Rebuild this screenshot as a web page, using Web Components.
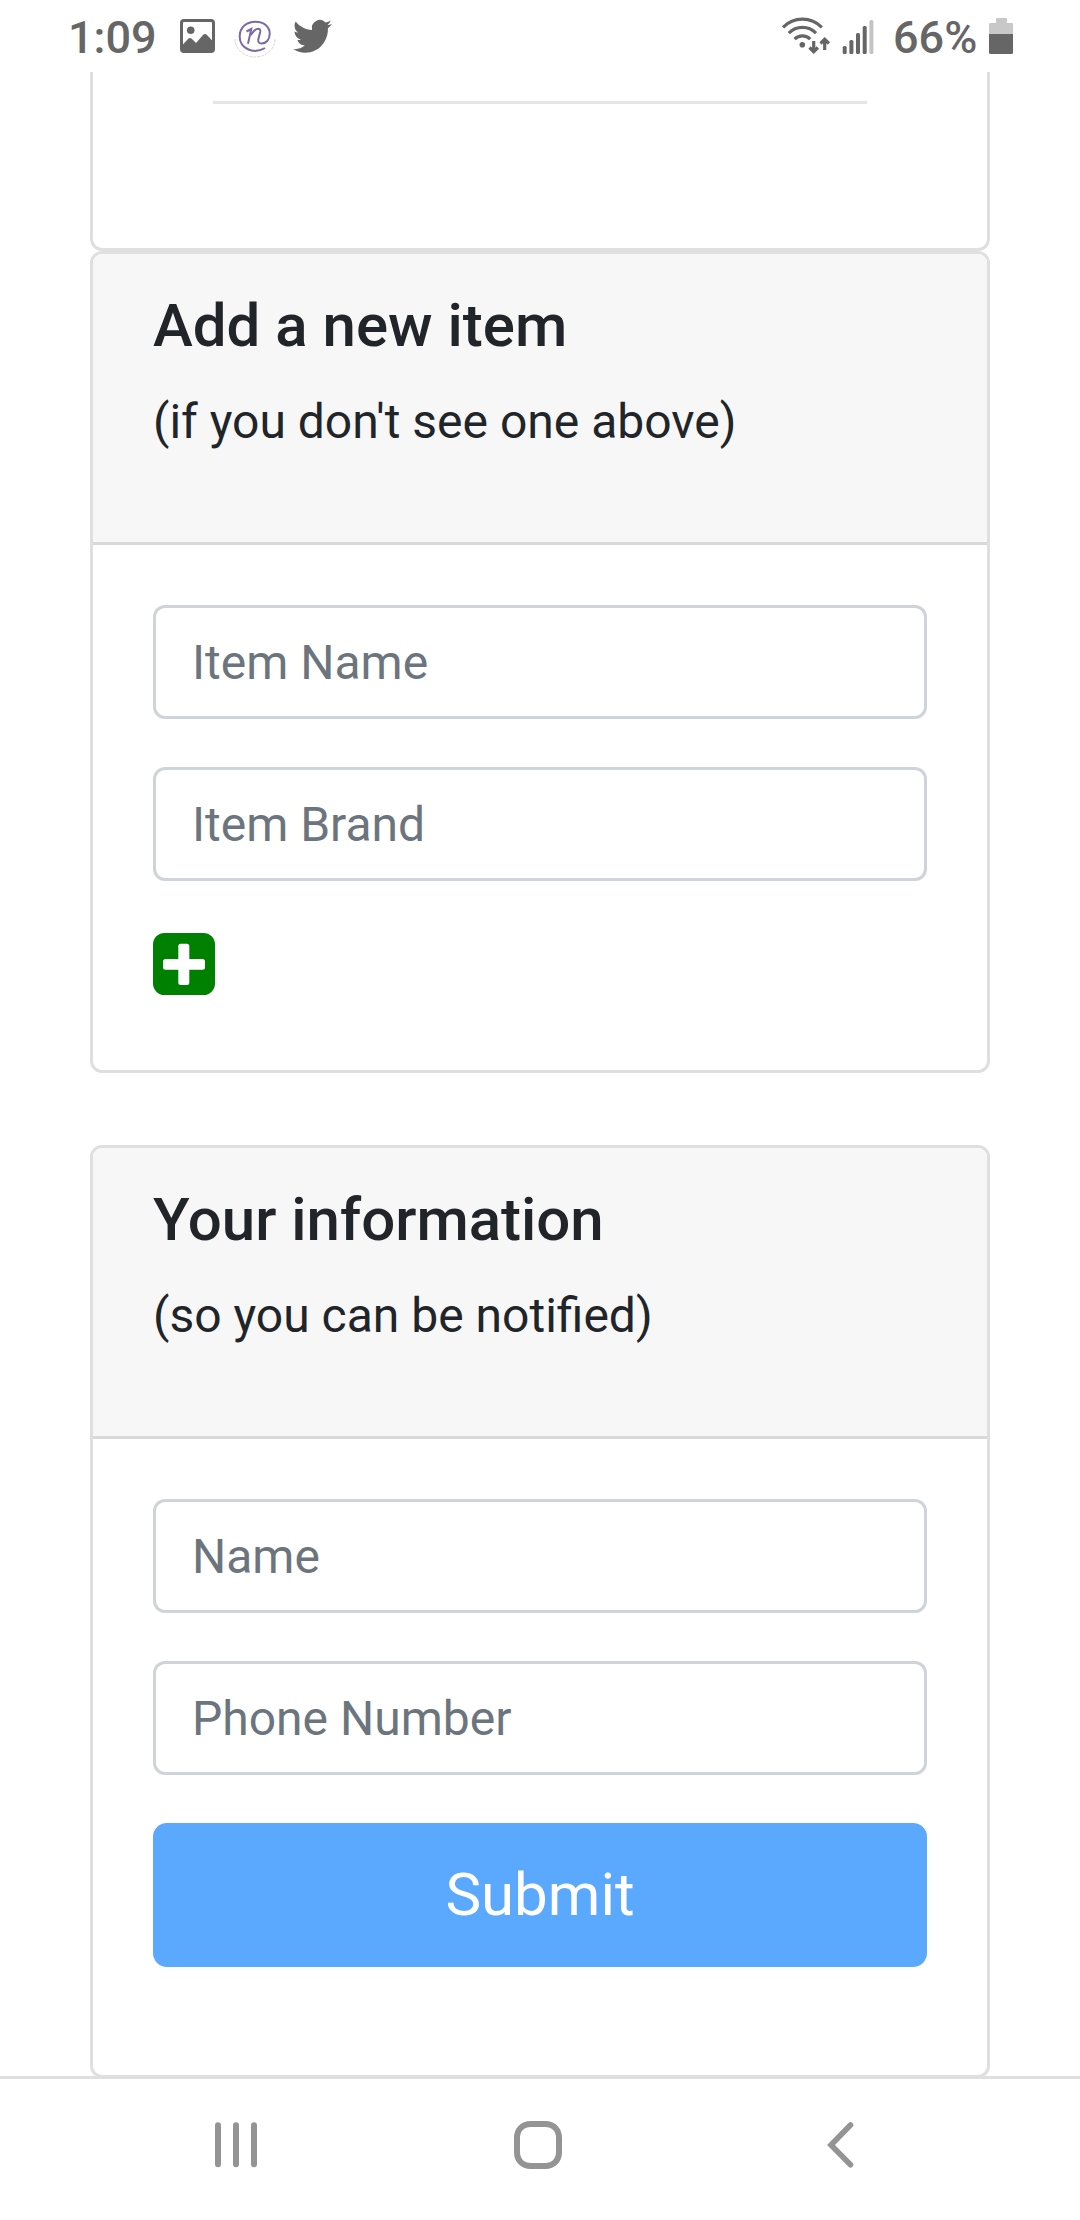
<!DOCTYPE html>
<html lang="en">
<head>
<meta charset="utf-8">
<meta name="viewport" content="width=device-width">
<title>Add a new item</title>
<style>
html, body { margin: 0; height: 2220px; overflow: hidden; background: #fff; }
body { font-family: Roboto, "Liberation Sans", sans-serif; color: #212529; }
</style>
</head>
<body>
<phone-screen>
  <status-bar slot="top" time="1:09" battery="66%"></status-bar>
  <list-card></list-card>
  <form-card>
    <span slot="title">Add a new item</span>
    <span slot="note">(if you don't see one above)</span>
    <text-field label="Item Name"></text-field>
    <text-field label="Item Brand"></text-field>
    <add-button></add-button>
  </form-card>
  <form-card class="second">
    <span slot="title">Your information</span>
    <span slot="note">(so you can be notified)</span>
    <text-field label="Name"></text-field>
    <text-field label="Phone Number"></text-field>
    <submit-button>Submit</submit-button>
  </form-card>
  <nav-bar slot="bottom"></nav-bar>
</phone-screen>

<script>
const define = (name, html, setup) => {
  const template = document.createElement('template');
  template.innerHTML = html;
  customElements.define(name, class extends HTMLElement {
    constructor() {
      super();
      this.attachShadow({ mode: 'open' }).append(template.content.cloneNode(true));
    }
    connectedCallback() {
      if (setup) setup(this, this.shadowRoot);
    }
  });
};

define('phone-screen', `
<style>
  :host { display: flex; flex-direction: column; width: 1080px; height: 2220px; background: #fff; }
  main { flex: 1; min-height: 0; overflow: hidden; display: flex; flex-direction: column; padding: 0 90px; }
  ::slotted(.second) { margin-top: 72px; }
</style>
<slot name="top"></slot>
<main><slot></slot></main>
<slot name="bottom"></slot>`);

define('status-bar', `
<style>
  :host { display: flex; justify-content: space-between; box-sizing: border-box; flex: none; height: 72px;
    padding: 0 67px 0 68px; color: #666; font-size: 45px; font-weight: 500; line-height: 75px; white-space: nowrap; }
  div { display: flex; }
  svg { display: block; flex: none; height: 72px; }
  .time { width: 112px; }
  .level { width: 96px; }
</style>
<div>
  <span class="time"></span>
  <svg width="35" viewBox="180 0 35 72" fill="none">
    <rect x="181.5" y="20.5" width="32" height="31" rx="2.5" stroke="#666" stroke-width="3"/>
    <circle cx="190.7" cy="30.3" r="3.8" fill="#666"/>
    <path d="M182 45.5L188 39Q190 37 192 39L196 43L203 35Q205 33 207 35L213.5 42V51.5H182Z" fill="#666"/>
  </svg>
  <svg width="42" style="margin-left:19px" viewBox="234 0 42 72" fill="none">
    <circle cx="255" cy="36.5" r="20" fill="#fff"/>
    <path d="M235 39A20 18 0 0 0 275 39" stroke="#ccc" stroke-width=".8" stroke-dasharray="3 1"/>
    <path d="M265 48C253 55 240 48 239.700 37C239.500 27 247 21.700 255.500 21.700C264 21.700 270 27 269.700 34C269.500 40 266 43.500 261.700 43.500C258.500 43.500 257.800 41.500 258.500 38.500L260.200 32C261 27.500 256.500 28 253.500 31.500L250.500 35" stroke="#7b68a6" stroke-width="2"/>
    <path d="M246.500 31.500L251.300 29L248 43.700" stroke="#7b68a6" stroke-width="2"/>
  </svg>
  <svg width="39" style="margin-left:16.5px" viewBox="0 0 39 72">
    <path transform="translate(0 16.2) scale(1.62 1.68)" fill="#666" d="M23.953 4.57a10 10 0 01-2.825.775 4.958 4.958 0 002.163-2.723c-.951.555-2.005.959-3.127 1.184a4.92 4.92 0 00-8.384 4.482C7.69 8.095 4.067 6.13 1.64 3.162a4.822 4.822 0 00-.666 2.475c0 1.71.87 3.213 2.188 4.096a4.904 4.904 0 01-2.228-.616v.06a4.923 4.923 0 003.946 4.827 4.996 4.996 0 01-2.212.085 4.936 4.936 0 004.604 3.417 9.867 9.867 0 01-6.102 2.105c-.39 0-.779-.023-1.17-.067a13.995 13.995 0 007.557 2.209c9.053 0 13.998-7.496 13.998-13.985 0-.21 0-.42-.015-.63A9.935 9.935 0 0024 4.59z"/>
  </svg>
</div>
<div>
  <svg width="112" viewBox="781 0 112 72" fill="none">
    <g stroke="#666" stroke-width="3.2">
      <path d="M783 27.3A27 27 0 0 1 821.8 27.3"/>
      <path d="M788.8 33.2A19 19 0 0 1 816 33.2"/>
      <path d="M794.6 39.2A11 11 0 0 1 810.2 39.2"/>
      <path d="M813.7 41V51.5M809.5 47.5L813.7 51.7L817.9 47.5M824.7 50V39.5M820.5 43.5L824.7 39.3L828.9 43.5"/>
    </g>
    <circle cx="802.3" cy="44.7" r="2.8" fill="#666"/>
    <g fill="#666">
      <rect x="842.7" y="46" width="4" height="8" rx="1.5"/>
      <rect x="849.4" y="40" width="4" height="14" rx="1.5"/>
      <rect x="856" y="33" width="4" height="21" rx="1.5"/>
      <rect x="862.7" y="26" width="4" height="28" rx="1.5"/>
      <rect x="869.4" y="20" width="4" height="34" rx="1.5" fill="#c4c4c4"/>
    </g>
  </svg>
  <span class="level"></span>
  <svg width="24" viewBox="989 0 24 72">
    <path d="M996 23V19Q996 18 997 18H1006Q1007 18 1007 19V23H1012Q1013 23 1013 24V34H989V24Q989 23 990 23Z" fill="#c8c8c8"/>
    <path d="M989 34H1013V52.5Q1013 54 1011.5 54H990.5Q989 54 989 52.5Z" fill="#666"/>
  </svg>
</div>`, (host, root) => {
  root.querySelector('.time').textContent = host.getAttribute('time');
  root.querySelector('.level').textContent = host.getAttribute('battery');
});

// Lower end of the scrolled item list.
define('list-card', `
<style>
  :host { display: block; box-sizing: border-box; flex: none; height: 179px; padding: 29px 120px 0;
    border: 3px solid #dfdfdf; border-top: 0; border-radius: 0 0 12px 12px; }
  hr { margin: 0; border: 0; height: 3px; background: #e5e5e5; }
</style>
<hr>`);

define('form-card', `
<style>
  :host { display: block; box-sizing: border-box; flex: none; border: 3px solid #dfdfdf; border-radius: 12px; background: #fff; }
  header { padding: 36px 60px; background: #f7f7f7; border-bottom: 3px solid #d9d9d9; border-radius: 9px 9px 0 0; }
  h5 { margin: 0 0 24px; font-size: 60px; line-height: 72px; font-weight: 500; }
  p { margin: 0 0 48px; font-size: 48px; line-height: 72px; }
  section { display: flex; flex-direction: column; gap: 48px; padding: 60px 60px 108px; }
  :host(:not(.second)) section { padding-bottom: 75px; }
</style>
<header><h5><slot name="title"></slot></h5><p><slot name="note"></slot></p></header>
<section><slot></slot></section>`);

define('text-field', `
<style>
  :host { display: block; }
  input { display: block; box-sizing: border-box; width: 100%; height: 114px; margin: 0; padding: 18px 36px;
    border: 3px solid #ced4da; border-radius: 12px; background: #fff; outline: 0;
    font: inherit; font-size: 48px; line-height: 72px; color: #495057; }
  input::placeholder { color: #6c757d; opacity: 1; }
</style>
<input type="text">`, (host, root) => {
  root.querySelector('input').placeholder = host.getAttribute('label');
});

define('add-button', `
<style>
  :host { display: block; padding-top: 4px; }
  svg { display: block; }
</style>
<svg width="62" height="62" viewBox="0 0 62 62">
  <rect width="62" height="62" rx="11.5" fill="green"/>
  <rect x="25.3" y="10.7" width="11" height="41.3" rx="2.5" fill="#fff"/>
  <rect x="10" y="26" width="42" height="10.7" rx="2.5" fill="#fff"/>
</svg>`);

define('submit-button', `
<style>
  :host { display: block; }
  button { display: block; width: 100%; height: 144px; margin: 0; padding: 0; border: 0; border-radius: 14px;
    background: #5aa9ff; color: #fff; font: inherit; font-size: 60px; line-height: 90px; }
</style>
<button type="button"><slot></slot></button>`);

define('nav-bar', `
<style>
  :host { display: flex; box-sizing: border-box; flex: none; height: 144px; padding-left: 215px;
    border-top: 3px solid #dfdfdf; background: #fff; align-items: flex-start; }
  svg { display: block; margin-top: 40px; }
  .home { margin-left: 257px; }
  .back { margin-left: 265px; }
</style>
<svg width="42" height="52" viewBox="215 2119 42 52" fill="none" stroke="#949494" stroke-width="6" stroke-linecap="round">
  <path d="M218 2125.3V2164.3M236 2125.3V2164.3M254 2125.3V2164.3"/>
</svg>
<svg class="home" width="48" height="52" viewBox="514 2119 48 52" fill="none" stroke="#949494" stroke-width="6">
  <path d="M531 2124H545C554 2124 559 2130 559 2138V2152C559 2160 554 2166 545 2166H531C522 2166 517 2160 517 2152V2138C517 2130 522 2124 531 2124Z"/>
</svg>
<svg class="back" width="27" height="52" viewBox="827 2119 27 52" fill="none" stroke="#949494" stroke-width="5.6" stroke-linecap="round">
  <path d="M850.5 2125L831 2145L850.5 2164.7"/>
</svg>`);
</script>
</body>
</html>
